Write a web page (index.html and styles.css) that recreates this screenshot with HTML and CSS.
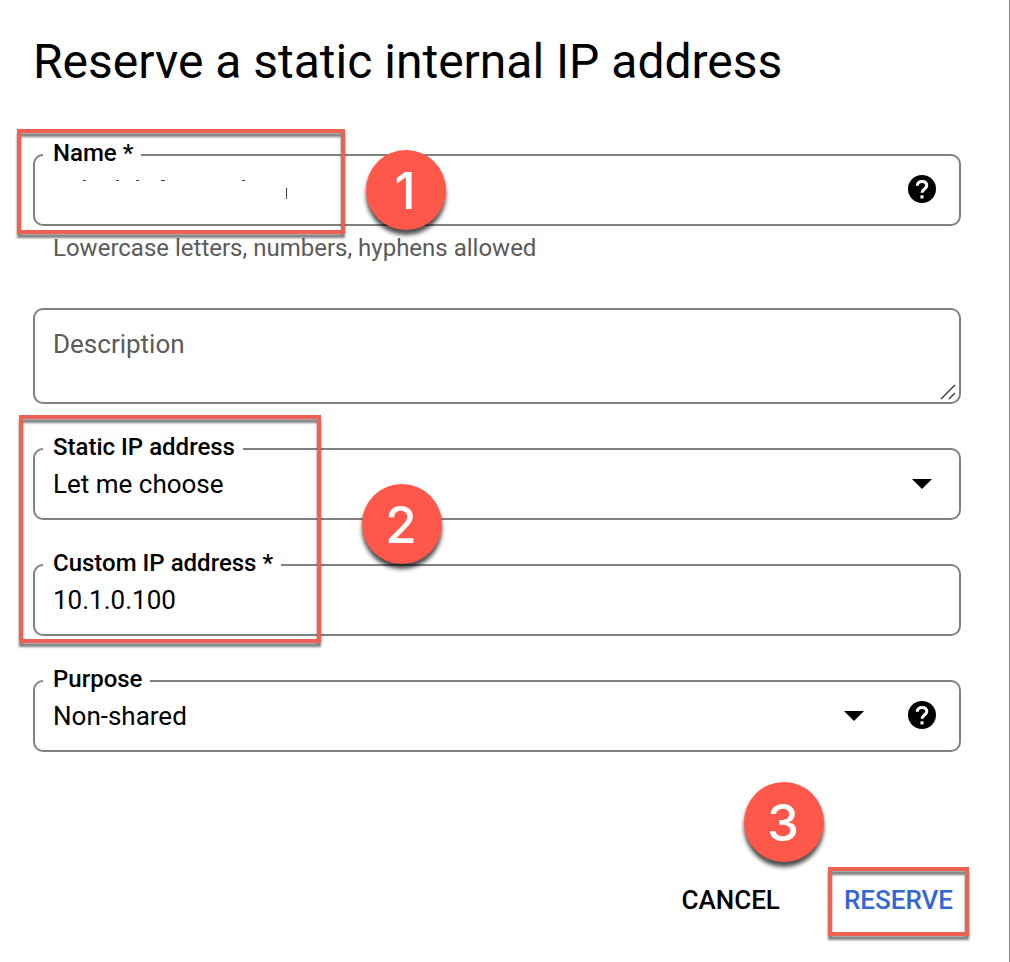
FILE: index.html
```html
<!DOCTYPE html>
<html lang="en">
<head>
<meta charset="utf-8">
<title>Reserve a static internal IP address</title>
<link rel="stylesheet" href="styles.css">
</head>
<body>
<main class="dialog">
  <h1 class="title">Reserve a static internal IP address</h1>
  <form class="form">
    <div class="group">
      <div class="field">
        <label class="label" for="name">Name *</label>
        <input class="control" id="name" type="text" aria-describedby="name-hint">
        <button class="help" type="button" aria-label="Help for name">
          <svg width="28" height="28" viewBox="0 0 28 28"><circle cx="14" cy="14" r="14"/><path d="M9.200 10.800c0-2.900 2-4.400 4.800-4.400s4.800 1.500 4.800 4.100c0 3.400-4.800 3.600-4.800 7.300" fill="none" stroke="#fff" stroke-width="3"/><path d="M12.500 20.300h3v3.200h-3z" fill="#fff"/></svg>
        </button>
        <svg class="residue" width="210" height="24" viewBox="0 0 210 24"><path d="M4 1.500h3M37 1.500h3M57 1.500h3M82 1.500h4M163 1.500h3M207.500 9v11" fill="none" stroke="#444"/></svg>
      </div>
      <p class="hint" id="name-hint">Lowercase letters, numbers, hyphens allowed</p>
      <span class="mark mark-name"></span>
      <span class="badge badge-one">1</span>
    </div>

    <div class="field field-tall">
      <textarea class="control area" aria-label="Description" placeholder="Description"></textarea>
      <svg class="grip" width="16" height="16" viewBox="0 0 16 16"><path d="M1 15 15 1M9 15l6-6" fill="none" stroke="#444" stroke-width="1.500"/></svg>
    </div>

    <div class="group group-address">
      <div class="field">
        <label class="label" for="mode">Static IP address</label>
        <div class="picker picker-wide">
          <select class="control" id="mode"><option>Let me choose</option></select>
          <svg class="arrow" width="20" height="10" viewBox="0 0 20 10"><path d="M0 0h20L10 10z"/></svg>
        </div>
      </div>
      <div class="field">
        <label class="label" for="custom">Custom IP address *</label>
        <input class="control" id="custom" type="text" value="10.1.0.100">
      </div>
      <span class="mark mark-address"></span>
      <span class="badge badge-two">2</span>
    </div>

    <div class="field">
      <label class="label" for="purpose">Purpose</label>
      <div class="picker">
        <select class="control" id="purpose"><option>Non-shared</option></select>
        <svg class="arrow" width="20" height="10" viewBox="0 0 20 10"><path d="M0 0h20L10 10z"/></svg>
      </div>
      <button class="help" type="button" aria-label="Help for purpose">
        <svg width="28" height="28" viewBox="0 0 28 28"><circle cx="14" cy="14" r="14"/><path d="M9.200 10.800c0-2.900 2-4.400 4.800-4.400s4.800 1.500 4.800 4.100c0 3.400-4.800 3.600-4.800 7.300" fill="none" stroke="#fff" stroke-width="3"/><path d="M12.500 20.300h3v3.200h-3z" fill="#fff"/></svg>
      </button>
    </div>

    <div class="actions">
      <button class="action" type="button">CANCEL</button>
      <div class="group">
        <button class="action action-primary" type="submit">RESERVE</button>
        <span class="mark mark-reserve"></span>
        <span class="badge badge-three">3</span>
      </div>
    </div>
  </form>
</main>
</body>
</html>
```
FILE: styles.css
```css
* { box-sizing: border-box; }
body {
  margin: 0;
  background: #fff;
  color: #000;
  font-family: Roboto, Arial, sans-serif;
}
.dialog {
  min-height: 100vh;
  padding: 34px 48px 24px 33px;
  border-right: 1px solid #858585;
}
.title {
  margin: 0 0 64px;
  font-size: 48px;
  font-weight: 400;
  line-height: 56px;
}
.form {
  display: flex;
  flex-direction: column;
  gap: 44px;
}
.group { position: relative; }
.group-address {
  display: flex;
  flex-direction: column;
  gap: 44px;
}
.field {
  position: relative;
  display: flex;
  align-items: center;
  gap: 44px;
  min-height: 72px;
  padding: 0 23px 0 18px;
  border: 2px solid #808080;
  border-radius: 10px;
}
.field-tall {
  min-height: 96px;
  padding: 0;
}
.label {
  position: absolute;
  top: -17px;
  left: 8px;
  padding: 0 8px 0 10px;
  background: #fff;
  font-size: 24px;
  font-weight: 500;
  line-height: 28px;
}
.control {
  flex: 1;
  width: 100%;
  min-width: 0;
  height: 40px;
  margin: 0;
  padding: 0;
  border: 0;
  outline: 0;
  background: transparent;
  color: #000;
  font-family: inherit;
  font-size: 26px;
  appearance: none;
}
.area {
  display: block;
  height: 92px;
  padding: 18px;
  line-height: 32px;
  resize: none;
}
.area::placeholder { color: #5a5a5a; opacity: 1; }
.grip {
  position: absolute;
  right: 3px;
  bottom: 2px;
}
.picker {
  flex: 1;
  display: grid;
  align-items: center;
}
.picker > * { grid-area: 1 / 1; }
.picker-wide { padding-right: 4px; }
.arrow {
  justify-self: end;
  pointer-events: none;
}
.help {
  padding: 0 0 2px;
  border: 0;
  background: none;
}
.help svg { display: block; }
.residue {
  position: absolute;
  top: 23px;
  left: 44px;
  pointer-events: none;
}
.hint {
  margin: 7px 0 0;
  padding: 0 0 1px 20px;
  color: #5a5a5a;
  font-size: 24px;
  line-height: 30px;
}
.actions {
  display: flex;
  justify-content: flex-end;
  gap: 32px;
  margin: 68px -8px 0 0;
}
.action {
  height: 72px;
  padding: 0 16px;
  border: 0;
  background: none;
  color: #000;
  font-family: inherit;
  font-size: 26px;
  font-weight: 500;
}
.action-primary { color: #3367d6; }
.mark {
  position: absolute;
  border: 4px solid #f06055;
  filter: drop-shadow(0 4px 1px rgba(0, 0, 0, 0.5));
  pointer-events: none;
}
.mark-name {
  top: -25px;
  left: -16px;
  width: 328px;
  height: 105px;
}
.mark-address {
  top: -33px;
  left: -14px;
  width: 302px;
  height: 228px;
}
.mark-reserve {
  inset: 3px 0 0;
}
.badge {
  position: absolute;
  width: 80px;
  height: 80px;
  padding-right: 2px;
  border-radius: 50%;
  background: #ff584a;
  box-shadow: 0 5px 4px rgba(0, 0, 0, 0.7);
  color: #fff;
  font-family: Inter, "Liberation Sans", sans-serif;
  font-size: 51px;
  font-weight: 500;
  line-height: 82px;
  text-align: center;
  pointer-events: none;
}
.badge-one {
  top: -4px;
  left: 333px;
}
.badge-two {
  top: 36px;
  left: 329px;
}
.badge-three {
  top: -82px;
  right: 145px;
}
```
